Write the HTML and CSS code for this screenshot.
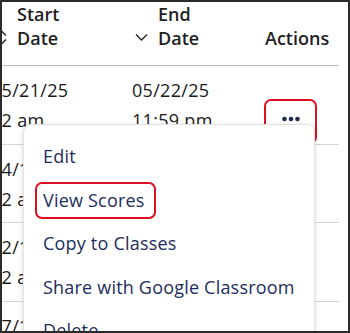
FILE: index.html
```html
<!DOCTYPE html>
<html lang="en">
<head>
    <meta charset="UTF-8">
    <meta name="viewport" content="width=device-width, initial-scale=1.0">
    <title>Assignments</title>
    <link rel="stylesheet" href="styles.css">
</head>
<body>
    <div class="frame">
        <div class="grid">
            <div class="row head">
                <div class="cell">
                    <svg class="sort" width="13" height="17" viewBox="0 0 13 17"><path d="M1 6.5 L6.5 1 L12 6.5 M1 10.5 L6.5 16 L12 10.5" /></svg>
                    <span class="label">Start<br>Date</span>
                </div>
                <div class="cell">
                    <svg class="sort" width="13" height="17" viewBox="0 0 13 17"><path d="M1 5.5 L6.5 11 L12 5.5" /></svg>
                    <span class="label">End<br>Date</span>
                </div>
                <div class="cell actions-head">
                    <span class="label">Actions</span>
                </div>
            </div>

            <div class="row">
                <div class="cell data">05/21/25<br>12 am</div>
                <div class="cell data">05/22/25<br>11:59 pm</div>
                <div class="cell"><button class="more active"><svg width="18" height="6" viewBox="0 0 18 6"><circle cx="2.5" cy="3" r="2.3"/><circle cx="9" cy="3" r="2.3"/><circle cx="15.5" cy="3" r="2.3"/></svg></button></div>
            </div>
            <div class="row">
                <div class="cell data">04/14/25<br>12 am</div>
                <div class="cell data">04/18/25<br>11:59 pm</div>
                <div class="cell"><button class="more"></button></div>
            </div>
            <div class="row">
                <div class="cell data">02/10/25<br>12 am</div>
                <div class="cell data">02/14/25<br>11:59 pm</div>
                <div class="cell"><button class="more"></button></div>
            </div>
            <div class="row">
                <div class="cell data">07/15/24<br>12 am</div>
                <div class="cell data">07/19/24<br>11:59 pm</div>
                <div class="cell"><button class="more"></button></div>
            </div>
        </div>

        <div class="menu">
            <a class="item">Edit</a>
            <a class="item focused">View Scores</a>
            <a class="item">Copy to Classes</a>
            <a class="item">Share with Google Classroom</a>
            <a class="item">Delete</a>
        </div>
    </div>
</body>
</html>
```

FILE: styles.css
```css
body {
    margin: 0;
    font-family: "Open Sans", "Liberation Sans", sans-serif;
    background: #fff;
}
.frame {
    position: relative;
    width: 350px;
    height: 333px;
    box-sizing: border-box;
    border: 2px solid #2b2b2b;
    overflow: hidden;
}
.grid {
    width: 348px;
    margin-left: -11px;
}
.row {
    display: grid;
    grid-template-columns: 141px 132px 75px;
    height: 78.6px;
    box-sizing: border-box;
    border-bottom: 1px solid #d6d6d6;
    padding-top: 9px;
}
.row.head {
    height: 64px;
    padding-top: 0;
    padding-bottom: 15px;
    align-items: end;
    border-bottom-color: #bdbdbd;
}
.cell {
    display: flex;
    align-items: flex-end;
    padding-left: 3px;
}
.head .label {
    font-size: 18px;
    font-weight: 600;
    line-height: 24px;
    color: #1f1f1f;
}
.sort {
    flex: none;
    margin: 0 10px 4px 0;
}
.sort path {
    fill: none;
    stroke: #222;
    stroke-width: 1.4;
}
.actions-head {
    padding-left: 1px;
}
.data {
    display: block;
    padding-left: 0;
    font-size: 18px;
    letter-spacing: 0.3px;
    line-height: 30px;
    color: #1a1a1a;
}
.more {
    width: 53px;
    height: 45px;
    margin-top: 2px;
    margin-left: -3px;
    border: 2px solid transparent;
    border-radius: 7px;
    background: none;
    padding: 0 0 4px;
    display: flex;
    align-items: center;
    justify-content: center;
}
.more circle {
    fill: #1b2a55;
}
.more.active {
    border-color: #dc1020;
}
.menu {
    position: absolute;
    left: 21px;
    top: 122px;
    width: 292px;
    height: 240px;
    box-sizing: border-box;
    background: #fff;
    border: 1px solid #e3e3e3;
    border-radius: 8px;
    box-shadow: 0 1px 5px rgba(0, 0, 0, 0.14);
    padding: 13px 0 0 11px;
    display: flex;
    flex-direction: column;
    align-items: flex-start;
    gap: 6.5px;
}
.item {
    height: 37px;
    box-sizing: border-box;
    padding: 0 9px 0 6px;
    border: 2px solid transparent;
    border-radius: 7px;
    font-size: 18px;
    letter-spacing: 0.2px;
    line-height: 33px;
    color: #1d2d5c;
    white-space: nowrap;
}
.item.focused {
    border-color: #dc1020;
}
```
